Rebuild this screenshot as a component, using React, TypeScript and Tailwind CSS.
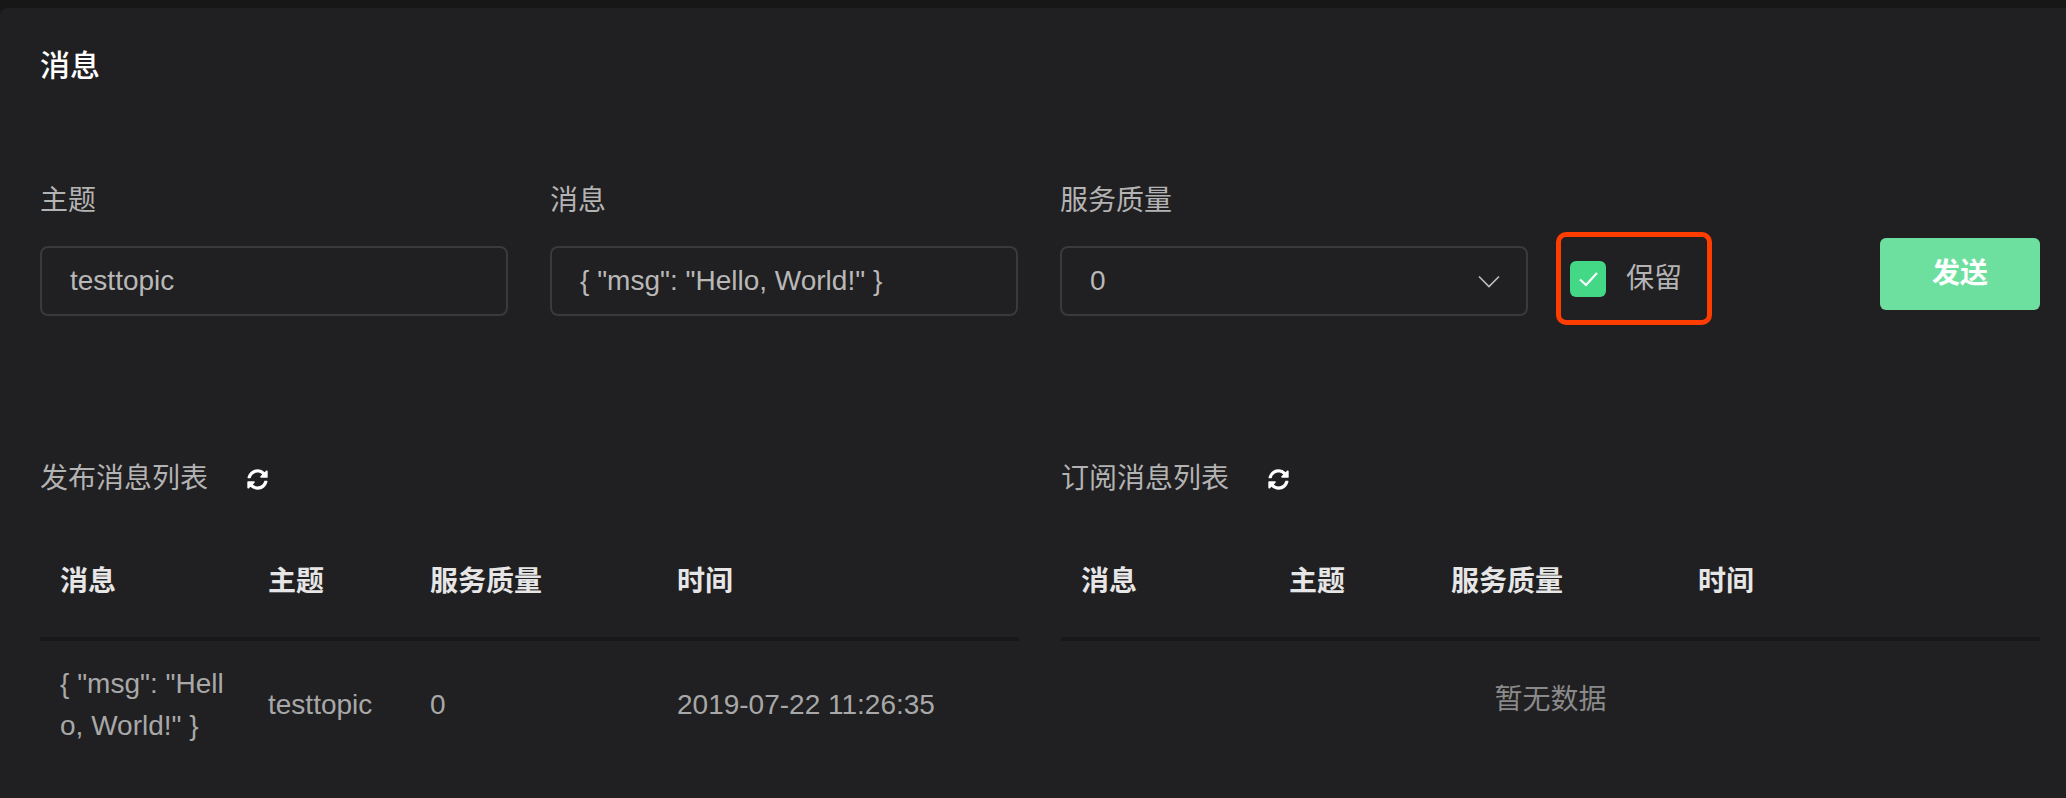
import { FaSyncAlt } from 'react-icons/fa';

const font = { fontFamily: '"Liberation Sans", "Noto Sans CJK SC", sans-serif' };

const cols = 'grid grid-cols-[208px_162px_247px_1fr]';

function Field({ label, value, select }: { label: string; value: string; select?: boolean }) {
  return (
    <div className="w-[468px] flex flex-col">
      <div className="text-[28px] leading-[40px] text-[#b3b3b3] h-[40px]">{label}</div>
      <div className="mt-[25px] h-[70px] rounded-[8px] border-2 border-[#3a393e] flex items-center pl-[28px] pr-[26px] text-[28px] text-[#b8b8b8]">
        <span className="flex-1">{value}</span>
        {select && (
          <svg width="22" height="13" viewBox="0 0 22 13" fill="none">
            <polyline points="1,1.5 11,11.5 21,1.5" stroke="#bfbfbf" strokeWidth="1.6" />
          </svg>
        )}
      </div>
    </div>
  );
}

function Table({ title, empty }: { title: string; empty?: boolean }) {
  return (
    <div className="flex flex-col">
      <div className="flex items-center h-[40px]">
        <span className="text-[28px] leading-[40px] text-[#b3b3b3]">{title}</span>
        <FaSyncAlt className="ml-[39px] text-white" size={21} />
      </div>
      <div className={`${cols} mt-[28px] h-[114px] items-center border-b-4 border-[#181818] text-[28px] font-bold text-[#e6e6e6]`}>
        <div className="pl-[20px]">消息</div>
        <div className="pl-[20px]">主题</div>
        <div className="pl-[20px]">服务质量</div>
        <div className="pl-[20px]">时间</div>
      </div>
      {empty ? (
        <div className="pt-[38px] text-center text-[28px] leading-[42px] text-[#8a8a8a]">暂无数据</div>
      ) : (
        <div className={`${cols} items-center pt-[22px] text-[28px] leading-[42px] text-[#a8a8a8]`}>
          <div className="pl-[20px]">
            {'{ "msg": "Hell'}
            <br />
            {'o, World!" }'}
          </div>
          <div className="pl-[20px]">testtopic</div>
          <div className="pl-[20px]">0</div>
          <div className="pl-[20px]">2019-07-22 11:26:35</div>
        </div>
      )}
    </div>
  );
}

export default function App() {
  return (
    <div className="w-full h-[798px] bg-[#171717] pt-[8px] overflow-hidden" style={font}>
      <div className="h-[790px] bg-[#201f21] rounded-tl-[8px] pl-[40px] pr-[26px]">
        <h1 className="pt-[37px] text-[30px] leading-[42px] font-medium text-white">消息</h1>

        <div className="mt-[94px] flex items-start">
          <Field label="主题" value="testtopic" />
          <div className="w-[42px]" />
          <Field label="消息" value={'{ "msg": "Hello, World!" }'} />
          <div className="w-[42px]" />
          <Field label="服务质量" value="0" select />

          <div className="ml-[28px] mt-[51px] w-[156px] h-[93px] border-[5px] border-[#ff3d00] rounded-[10px] flex items-center pl-[9px]">
            <div className="w-[36px] h-[36px] rounded-[6px] bg-[#43d886] flex items-center justify-center">
              <svg width="24" height="20" viewBox="0 0 24 20" fill="none">
                <polyline points="4,10.5 10,16 21,4" stroke="white" strokeWidth="2.2" />
              </svg>
            </div>
            <span className="ml-[20px] text-[28px] text-[#b3b3b3]">保留</span>
          </div>

          <button className="ml-auto mt-[57px] w-[160px] h-[72px] rounded-[6px] bg-[#6de0a0] text-white text-[28px] font-bold">
            发送
          </button>
        </div>

        <div className="mt-[134px] grid grid-cols-2 gap-[42px]">
          <Table title="发布消息列表" />
          <Table title="订阅消息列表" empty />
        </div>
      </div>
    </div>
  );
}
